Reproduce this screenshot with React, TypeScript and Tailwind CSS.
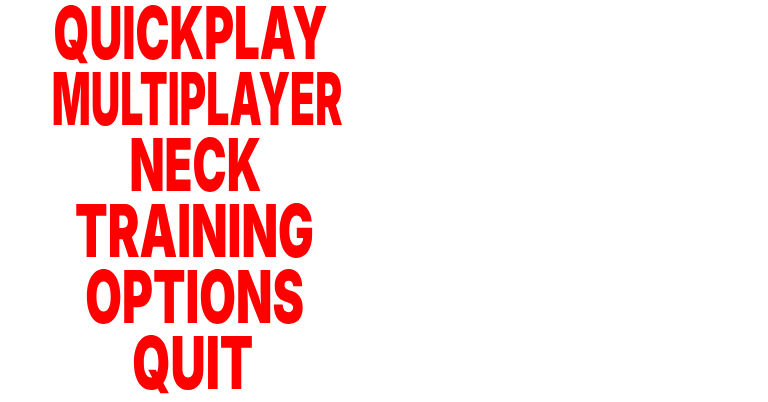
const ITEMS = [
  { label: "QUICKPLAY", cls: "scale-x-[0.624] translate-x-[-3px]" },
  { label: "MULTIPLAYER", cls: "scale-x-[0.559] translate-x-[3px]" },
  { label: "NECK", cls: "scale-x-[0.626] translate-x-[1px]" },
  { label: "TRAINING", cls: "scale-x-[0.651] translate-x-[0px]" },
  { label: "OPTIONS", cls: "scale-x-[0.648] translate-x-[1px]" },
  { label: "QUIT", cls: "scale-x-[0.667] translate-x-[-1px]" },
];

export default function App() {
  return (
    <div className="w-[768px] h-[402px] bg-white overflow-hidden">
      <div
        className="w-[388px] flex flex-col items-center"
        style={{ fontFamily: "Inter, 'DejaVu Sans', sans-serif" }}
      >
        {ITEMS.map((item) => (
          <div
            key={item.label}
            className={`h-[66px] leading-[66px] text-[73px] font-black text-[#ff0000] origin-center whitespace-nowrap ${item.cls}`}
          >
            {item.label}
          </div>
        ))}
      </div>
    </div>
  );
}
